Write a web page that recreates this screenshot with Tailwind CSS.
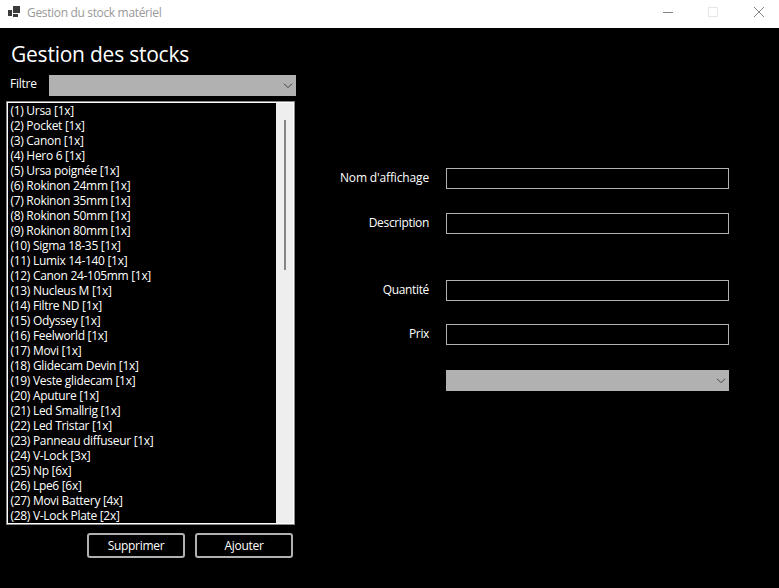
<!DOCTYPE html>
<html lang="fr">
<head>
<meta charset="utf-8">
<title>Gestion du stock matériel</title>
<script src="https://cdn.jsdelivr.net/npm/@tailwindcss/browser@4"></script>
</head>
<body class="w-[779px] h-[588px] overflow-hidden bg-black text-white font-['Open_Sans','Noto_Sans',sans-serif] text-[12px] leading-[15px] flex flex-col">
<header class="h-[28px] shrink-0 bg-white flex items-start text-[#999999]">
  <svg class="ml-[8px] mt-[6px] w-[13px] h-[12px]" viewBox="0 0 13 12" shape-rendering="crispEdges"><path fill="#3c3c3c" d="M0 4h4v6H0zM5 0h7v7H5zM5 8h5v3H5z"/></svg>
  <span class="ml-[6px] mt-[5px] tracking-[-0.34px] whitespace-nowrap">Gestion du stock matériel</span>
  <div class="ml-auto mr-[15px] mt-[7px] flex">
    <svg class="w-[10px] h-[10px]" viewBox="0 0 10 10"><path stroke="#858585" d="M0 5.5h10"/></svg>
    <svg class="ml-[35px] w-[10px] h-[10px]" viewBox="0 0 10 10"><rect x=".5" y=".5" width="9" height="9" fill="none" stroke="#e6e6e6"/></svg>
    <svg class="ml-[36px] w-[10px] h-[10px]" viewBox="0 0 10 10"><path stroke="#858585" d="M0 0l10 10M10 0L0 10"/></svg>
  </div>
</header>
<main class="flex flex-1 tracking-[-0.25px]">
  <section class="w-[296px] shrink-0">
    <h1 class="mt-[11px] ml-[11px] text-[21px] leading-[30px] tracking-[-0.23px] whitespace-nowrap">Gestion des stocks</h1>
    <div class="mt-[6px] h-[21px] flex">
      <label class="w-[49px] pl-[10px] pt-[1px]">Filtre</label>
      <div class="flex-1 bg-[#b1b1b1] flex justify-end pr-[3px] pt-[8px]"><svg class="w-[10px] h-[6px]" viewBox="0 0 10 6"><path fill="none" stroke="#444" d="M1 .7L5 4.700 9 .7"/></svg></div>
    </div>
    <div class="mt-[5px] ml-[6px] w-[289px] h-[424px] border border-[#85878d]">
      <div class="h-full border border-white flex">
        <ul id="stock" class="w-[268px] whitespace-nowrap pl-[2.5px] tracking-[-0.3px]"></ul>
        <div class="flex-1 bg-[#eeeeee] pt-[17px] pl-[8px]"><div class="w-[2px] h-[150px] bg-[#858585]"></div></div>
      </div>
    </div>
    <div class="mt-[8px] ml-[87px] flex gap-[10px]">
      <button class="w-[98px] h-[25px] border-2 border-[#b1b1b1] rounded-[3px] flex items-center justify-center tracking-[-0.3px]">Supprimer</button>
      <button class="w-[98px] h-[25px] border-2 border-[#b1b1b1] rounded-[3px] flex items-center justify-center tracking-[-0.3px]">Ajouter</button>
    </div>
  </section>
  <section class="pt-[140px] w-[433px]">
    <div class="flex h-[21px]"><label class="w-[133px] pt-[2px] text-right whitespace-nowrap tracking-[-0.15px]">Nom d'affichage</label><div class="ml-[17px] w-[283px] border border-[#b1b1b1]"></div></div>
    <div class="flex h-[21px] mt-[24px]"><label class="w-[133px] pt-[2px] text-right tracking-[-0.35px]">Description</label><div class="ml-[17px] w-[283px] border border-[#b1b1b1]"></div></div>
    <div class="flex h-[21px] mt-[46px]"><label class="w-[133px] pt-[2px] text-right tracking-[-0.35px]">Quantité</label><div class="ml-[17px] w-[283px] border border-[#b1b1b1]"></div></div>
    <div class="flex h-[21px] mt-[23px]"><label class="w-[133px] pt-[2px] text-right tracking-[-0.35px]">Prix</label><div class="ml-[17px] w-[283px] border border-[#b1b1b1]"></div></div>
    <div class="mt-[25px] ml-[150px] w-[283px] h-[21px] bg-[#b1b1b1] flex justify-end pr-[3px] pt-[8px]"><svg class="w-[10px] h-[6px]" viewBox="0 0 10 6"><path fill="none" stroke="#444" d="M1 .7L5 4.700 9 .7"/></svg></div>
  </section>
</main>
<script>
const items = ["Ursa [1x]","Pocket [1x]","Canon [1x]","Hero 6 [1x]","Ursa poignée [1x]","Rokinon 24mm [1x]","Rokinon 35mm [1x]","Rokinon 50mm [1x]","Rokinon 80mm [1x]","Sigma 18-35 [1x]","Lumix 14-140 [1x]","Canon 24-105mm [1x]","Nucleus M [1x]","Filtre ND [1x]","Odyssey [1x]","Feelworld [1x]","Movi [1x]","Glidecam Devin [1x]","Veste glidecam [1x]","Aputure [1x]","Led Smallrig [1x]","Led Tristar [1x]","Panneau diffuseur [1x]","V-Lock [3x]","Np [6x]","Lpe6 [6x]","Movi Battery [4x]","V-Lock Plate [2x]"];
const list = document.getElementById("stock");
items.forEach((name, i) => {
  const li = document.createElement("li");
  li.className = "h-[15px]";
  li.textContent = `(${i + 1}) ${name}`;
  list.append(li);
});
</script>
</body>
</html>
